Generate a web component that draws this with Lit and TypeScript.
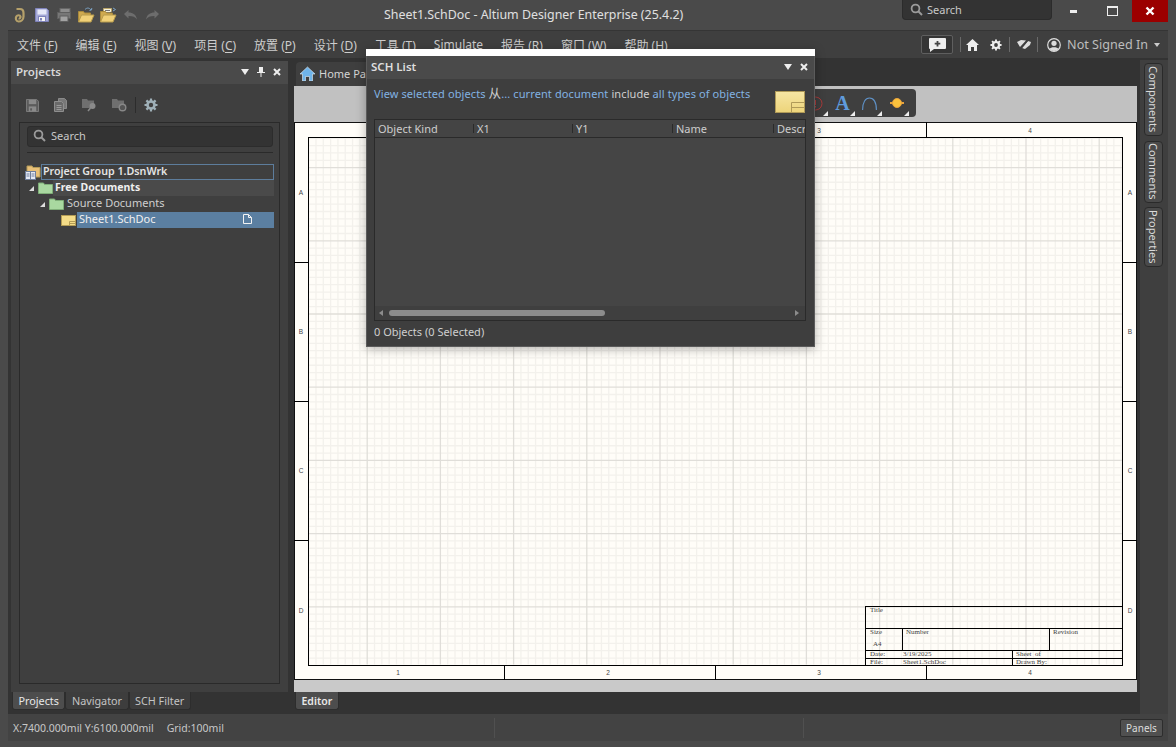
import { LitElement, html, css, svg } from 'lit';
import { customElement } from 'lit/decorators.js';

const saveIcon = html`<svg width="14" height="14" viewBox="0 0 14 14">
  <path d="M.5.5h11l2 2v11H.5z" fill="#a4a8d6" stroke="#7f83bb"/><rect x="2.500" y="1.500" width="9" height="5" fill="#e6e8f8"/><rect x="3.500" y="8.500" width="7" height="5" fill="#f6f6f6" stroke="#7f83bb"/><rect x="5" y="10" width="2" height="2.500" fill="#7f83bb"/>
</svg>`;

const dimFloppy = html`<svg width="13" height="13" viewBox="0 0 14 14">
  <path d="M.5.5h11l2 2v11H.5z" fill="#5c5c5c" stroke="#7f7f7f"/><rect x="3" y="1" width="8" height="4.500" fill="#8a8a8a"/><rect x="3" y="8" width="8" height="5.500" fill="#8a8a8a"/><rect x="4.500" y="10" width="2" height="2.500" fill="#5c5c5c"/>
</svg>`;

const printer = html`<svg width="14" height="14" viewBox="0 0 14 14">
  <rect x="3" y=".5" width="10" height="5" fill="#8d8d8d" stroke="#666"/><rect x=".5" y="4.500" width="13" height="6" fill="#777" stroke="#5f5f5f"/><rect x="3" y="8" width="8" height="5.500" fill="#a2a2a2" stroke="#5f5f5f"/>
</svg>`;

const openFolder = (papers: boolean) => html`<svg width="17" height="16" viewBox="0 0 17 16">
  ${papers ? svg`<path d="M3.500 8V1.500h8v3" fill="#f6f1df" stroke="#bba668"/><path d="M5 3.500h5M5 5.500h5" stroke="#777"/>` : svg`<path d="M7 2.500c2-2 4-2 6 .5" fill="none" stroke="#7ba2c4"/>`}
  <path d="M.5 15V4.500h5l1 1.500h6V8" fill="#cfa94f" stroke="#a98a3c"/><path d="M.5 15l3-7h12.500l-3 7z" fill="#f0d078" stroke="#b69a4c"/>
  ${papers ? svg`<path d="M13 1l2.500 1.500L13 4" fill="none" stroke="#7ba2c4"/>` : svg`<path d="M11.500 3.500L13.500 3l.3-2" fill="none" stroke="#7ba2c4"/>`}
</svg>`;

const undo = (flip: boolean) => html`<svg class=${flip ? 'flip' : ''} width="15" height="12" viewBox="0 0 15 12">
  <path d="M1 5l4.500-4v2.500c4.500 0 7.500 2 8.500 7-1.500-2.500-4-3.500-8.500-3.500V9.500z" fill="#6d6d6d"/>
</svg>`;

const magnifier = html`<svg width="13" height="13" viewBox="0 0 13 13"><circle cx="5.500" cy="5.500" r="3.900" fill="none" stroke="#9a9a9a" stroke-width="1.800"/><path d="M8.500 8.500l3.500 3.500" stroke="#9a9a9a" stroke-width="2"/></svg>`;

const gear = (color: string, hole: string, size = 14) => html`<svg width=${size} height=${size} viewBox="0 0 14 14">
  <circle cx="7" cy="7" r="4.800" fill=${color}/><path d="M7 .5v13M.5 7h13M2.400 2.400l9.200 9.200M11.600 2.400l-9.200 9.200" stroke=${color} stroke-width="2.200"/><circle cx="7" cy="7" r="2.200" fill=${hole}/>
</svg>`;

const greenFolder = html`<svg width="15" height="12" viewBox="0 0 15 12"><path d="M.5 11.500V1h5l1 1.500h8v9z" fill="#a9d8a0" stroke="#7fae78"/></svg>`;

const sheetIcon = html`<svg width="15" height="11" viewBox="0 0 15 11"><rect x=".5" y=".5" width="14" height="10" fill="#f4dc88" stroke="#b39c55"/><path d="M8.500 10.500v-4h6M8.500 8.500h6" fill="none" stroke="#b39c55"/></svg>`;

const cornerMark = html`<svg class="corner" width="5" height="5" viewBox="0 0 5 5"><path d="M5 0v5H0z" fill="#eee"/></svg>`;

const caret = html`<svg width="8" height="6" viewBox="0 0 8 6"><path d="M0 0h8L4 6z" fill="#eee"/></svg>`;

const closeX = html`<svg width="8" height="8" viewBox="0 0 8 8"><path d="M1 1l6 6M7 1L1 7" stroke="#eee" stroke-width="2"/></svg>`;

const pin = html`<svg width="8" height="10" viewBox="0 0 8 10"><path d="M2 0h4v5h2v1H4.500v4h-1V6H0V5h2z" fill="#eee"/></svg>`;

const MENU = [
  ['文件 (', 'F', ')'], ['编辑 (', 'E', ')'], ['视图 (', 'V', ')'], ['项目 (', 'C', ')'], ['放置 (', 'P', ')'], ['设计 (', 'D', ')'],
  ['工具 (', 'T', ')'], ['Simulate', '', ''], ['报告 (', 'R', ')'], ['窗口 (', 'W', ')'], ['帮助 (', 'H', ')'],
];

const GRID_X0 = 294;
const GRID_Y0 = 680;
const MINOR = 7.32;

function sheet() {
  const minor = [];
  const major = [];
  for (let i = 0; i * MINOR < 843; i++) {
    const x = GRID_X0 + i * MINOR;
    (i % 10 === 0 ? major : minor).push(svg`<line x1=${x} x2=${x} y1="122" y2="680"/>`);
  }
  for (let i = 0; i * MINOR < 558; i++) {
    const y = GRID_Y0 - i * MINOR;
    (i % 10 === 0 ? major : minor).push(svg`<line x1="294" x2="1137" y1=${y} y2=${y}/>`);
  }
  // the top 1 and 2 sit under the SCH List window
  const top: [number, string][] = [[819, '3'], [1030, '4']];
  const bottom: [number, string][] = [[398, '1'], [608, '2'], [819, '3'], [1030, '4']];
  const rows: [number, string][] = [[192, 'A'], [331, 'B'], [470, 'C'], [610, 'D']];
  return html`<svg class="sheet" width="843" height="558" viewBox="294 122 843 558">
    <defs><clipPath id="inner"><rect x="308.500" y="137.500" width="814" height="527"/></clipPath></defs>
    <rect x="294" y="122" width="843" height="558" fill="#fffdf8"/>
    <g clip-path="url(#inner)">
      <g stroke="#f3f1ec" stroke-width="1.300">${minor}</g>
      <g stroke="#e0ded9" stroke-width="1.300">${major}</g>
    </g>
    <g fill="none" stroke="#000" stroke-width="1" shape-rendering="crispEdges">
      <rect x="294.500" y="122.500" width="842" height="557" stroke="#111"/>
      <rect x="308.500" y="137.500" width="814" height="528"/>
      <path d="M504.500 122v15M715.500 122v15M926.500 122v15M504.500 665v15M715.500 665v15M926.500 665v15"/>
      <path d="M294 262.500h14M294 401.500h14M294 540.500h14M1123 262.500h14M1123 401.500h14M1123 540.500h14"/>
      <path d="M865.500 665V606.500H1123M865.500 628.500H1123M865.500 650.500H1123M865.500 658.500H1123M902.500 628.500v22M1049.500 628.500v22M1012.500 650.500v15"/>
    </g>
    <g class="sheet-text" text-anchor="middle">
      ${top.map(([x, t]) => svg`<text x=${x} y="133">${t}</text>`)}
      ${bottom.map(([x, t]) => svg`<text x=${x} y="675">${t}</text>`)}
      ${rows.map(([y, t]) => svg`<text x="301" y=${y + 3}>${t}</text><text x="1130" y=${y + 3}>${t}</text>`)}
    </g>
    <g class="sheet-text small">
      <text x="870" y="612">Title</text><text x="870" y="634">Size</text><text x="906" y="634">Number</text><text x="1053" y="634">Revision</text>
      <text x="873" y="646">A4</text><text x="870" y="656">Date:</text><text x="903" y="656">3/19/2025</text><text x="1016" y="656">Sheet&#160;&#160;of</text>
      <text x="870" y="664">File:</text><text x="903" y="664">Sheet1.SchDoc</text><text x="1016" y="664">Drawn By:</text>
    </g>
  </svg>`;
}

@customElement('app-root')
export class AppRoot extends LitElement {
  static styles = css`
    :host {
      display: block;
      position: relative;
      width: 1176px;
      height: 747px;
      overflow: hidden;
      background: #4a4a4a;
      color: #cfcfcf;
      font-family: 'Noto Sans', 'Noto Sans CJK SC', sans-serif;
      font-size: 11px;
    }
    svg { display: block; flex: none; }
    .flip { transform: scaleX(-1); }

    .titlebar { height: 30px; display: flex; align-items: flex-start; position: relative; }
    .quick { display: flex; align-items: center; height: 29px; padding-left: 14px; }
    .logo { margin-right: 10px; }
    .quick .q { margin-right: 8px; }
    .quick .q.tight { margin-right: 7px; }
    .quick .q.open-a { margin-right: 5px; }
    .quick .q.open-b { margin-right: 6px; }
    .title { position: absolute; left: 384px; top: 6px; font-size: 12.400px; color: #e0e0e0; white-space: nowrap; }
    .searchbox { margin-left: auto; width: 150px; height: 20px; box-sizing: border-box; background: #333; border: 1px solid #2b2b2b; border-top: 0; border-radius: 0 0 4px 4px; display: flex; align-items: center; gap: 4px; padding-left: 7px; color: #c8c8c8; }
    .winbtn { width: 36px; height: 22px; display: flex; align-items: center; justify-content: center; }
    .winbtn.min { margin-left: 4px; margin-right: 2px; }
    .winbtn.close { background: #9b0000; margin-left: 2px; margin-right: 8px; }

    .frame { margin: 0 8px; height: 711px; display: flex; flex-direction: column; background: #333; border-top: 1px solid #353535; box-sizing: border-box; }
    .menubar { height: 27px; flex: none; display: flex; align-items: center; background: #3f3f3f; padding-left: 9px; font-size: 12px; color: #cdcdcd; }
    .menu { display: flex; gap: 18px; }
    .menu u { text-underline-offset: 2px; }
    .tools { margin-left: auto; display: flex; align-items: center; margin-right: 8px; }
    .chat { width: 32px; height: 19px; box-sizing: border-box; border: 1px solid #5f5f5f; border-radius: 2px; background: #353535; display: flex; align-items: center; justify-content: center; margin-right: 7px; }
    .vsep { width: 1px; height: 15px; background: #6a6a6a; }
    .vsep.gap { margin-left: 2px; }
    .tool-ico { display: flex; width: 23px; justify-content: center; }
    .tool-ico.wide { width: 27px; }
    .user { display: flex; align-items: center; gap: 6px; margin-left: 9px; font-size: 12.600px; color: #bdbdbd; }

    .main { flex: 1; min-height: 0; display: flex; padding: 3px 0 0 3px; }
    .panel { width: 277px; display: flex; flex-direction: column; margin-right: 6px; }
    .panel-head { height: 23px; flex: none; display: flex; align-items: center; background: #4a4a4a; padding: 0 7px 2px 5px; box-sizing: border-box; font-weight: 600; font-size: 11.500px; color: #d8d8d8; }
    .head-actions { margin-left: auto; display: flex; align-items: center; gap: 8px; }
    .panel-body { flex: 1; background: #3f3f3f; padding: 0 8px; display: flex; flex-direction: column; min-height: 0; box-sizing: border-box; }
    .panel-tools { height: 38px; flex: none; display: flex; align-items: center; gap: 15px; padding: 4px 0 0 7px; box-sizing: border-box; }
    .panel-tools .vsep { height: 16px; background: #2c2c2c; margin: 0 -7px 0 -7px; }
    .tree-box { flex: 1; border: 1px solid #2a2a2a; margin-bottom: 8px; padding: 3px 6px 0 7px; box-sizing: border-box; }
    .pane-search { height: 21px; box-sizing: border-box; background: #333; border: 1px solid #2c2c2c; border-radius: 3px; display: flex; align-items: center; gap: 5px; padding: 0 0 2px 5px; color: #c8c8c8; }
    .rule { height: 1px; background: #2a2a2a; margin-top: 5px; }
    .tree { margin-top: 11px; display: flex; flex-direction: column; margin-left: -2px; margin-right: -1px; }
    .row { height: 16px; display: flex; align-items: center; white-space: nowrap; color: #cfcfcf; }
    .row .arrow { width: 0; height: 0; border-left: 5px solid transparent; border-bottom: 5px solid #ddd; margin-right: 4px; }
    .label { flex: 1; height: 100%; display: flex; align-items: center; padding: 0 0 3px 2px; box-sizing: border-box; }
    .l0 .label { border: 1px solid #5d7d9c; font-weight: 600; font-size: 10.700px; color: #e4e4e4; margin-left: -1px; padding: 0 0 2px 1px; }
    .l1 { padding-left: 4px; }
    .l1 .label { background: #4a4a4a; font-weight: 700; font-size: 10.500px; color: #efefef; padding-bottom: 2px; }
    .l2 { padding-left: 15px; }
    .l2 .label { padding-left: 3px; }
    .l3 { padding-left: 36px; }
    .l3 .label { background: #5b7fa1; color: #f0f0f0; justify-content: space-between; padding-right: 22px; margin-left: 1px; }
    .proj-ico { position: relative; width: 17px; height: 15px; }

    .tabs { display: flex; height: 22px; flex: none; background: #333; padding-left: 1px; }
    .tab { height: 18px; display: flex; align-items: center; padding: 0 5.500px; box-sizing: border-box; border: 1px solid #2d2d2d; border-top: 0; border-radius: 0 0 3px 3px; background: #3d3d3d; color: #c4c4c4; font-size: 10.800px; }
    .tab.on { background: #4d4d4d; color: #e8e8e8; }
    .tab.strong { font-weight: 600; font-size: 10.500px; }

    .doc { width: 843px; display: flex; flex-direction: column; }
    .doc-tabs { height: 25px; flex: none; display: flex; align-items: flex-end; }
    .doc-tab { margin-left: 2px; width: 104px; height: 24px; box-sizing: border-box; background: #3f3f3f; border-radius: 4px 4px 0 0; display: flex; align-items: center; gap: 4px; padding: 0 0 2px 4px; color: #d4d4d4; }
    .placer { height: 36px; flex: none; background: #c1c1c1; display: flex; justify-content: flex-end; padding: 3px 221px 0 0; box-sizing: border-box; }
    .active-bar { width: 400px; height: 28px; background: #3f3f3f; border-radius: 4px; display: flex; align-items: center; justify-content: flex-end; padding-right: 6px; box-sizing: border-box; }
    .ab-item { width: 27px; height: 28px; display: flex; align-items: center; justify-content: center; position: relative; }
    .corner { position: absolute; right: 1px; bottom: 1px; }
    .glyph-a { font: 700 20px 'Liberation Serif', serif; color: #5f9bdc; }
    .sheet-wrap { height: 570px; flex: none; background: #c9c9c9; }
    .sheet-text { font: 6.500px 'Liberation Sans', sans-serif; fill: #444; }
    .sheet-text.small { font: 7px 'Liberation Serif', serif; }
    .doc-foot { flex: 1; display: flex; }

    .dock { width: 28px; margin-left: 3px; margin-top: -1px; background: #3f3f3f; display: flex; flex-direction: column; align-items: center; gap: 4.500px; padding-top: 3px; box-sizing: border-box; }
    .dock-tab { width: 19px; box-sizing: border-box; border: 1px solid #2a2a2a; border-radius: 4px; background: #4a4a4a; writing-mode: vertical-rl; display: flex; align-items: center; justify-content: center; color: #dadada; font-size: 11px; margin-right: 2px; }
    .dock-tab.components { height: 73px; }
    .dock-tab.comments { height: 62px; }
    .dock-tab.properties { height: 60px; }

    .status { height: 27px; flex: none; background: #434343; display: flex; align-items: center; padding-left: 5px; color: #c8c8c8; position: relative; font-size: 10.500px; }
    .status span + span { margin-left: 13px; }
    .status .panels { position: absolute; right: 5px; top: 5px; height: 18px; width: 43px; margin: 0; box-sizing: border-box; border: 1px solid #2d2d2d; border-radius: 2px; background: #505050; display: flex; align-items: center; justify-content: center; color: #ddd; font-size: 10px; }
    .divider { position: absolute; top: 4px; height: 20px; width: 1px; background: #505050; }
    .d1 { left: 486px; }
    .d2 { left: 795px; }

    .dialog { position: absolute; left: 366px; top: 49px; width: 449px; height: 298px; box-sizing: border-box; background: #3e3e3e; border-right: 1px solid #5b5b5b; border-bottom: 1px solid #5b5b5b; border-left: 1px solid #5b5b5b; box-shadow: 0 2px 10px rgba(0, 0, 0, 0.3); display: flex; flex-direction: column; }
    .dlg-top { height: 7px; background: #fff; flex: none; margin: 0 -1px; }
    .dlg-head { height: 23px; flex: none; display: flex; align-items: center; background: #4a4a4a; padding: 0 6px 2px 4px; box-sizing: border-box; font-weight: 600; font-size: 11.500px; color: #dedede; }
    .dlg-body { flex: 1; padding: 0 8px 0 7px; display: flex; flex-direction: column; min-height: 0; }
    .filter { height: 40px; flex: none; display: flex; align-items: flex-start; padding-top: 4px; box-sizing: border-box; color: #cfcfcf; }
    .filter-text { white-space: pre; letter-spacing: 0.100px; }
    .filter a { color: #82b2e2; }
    .cjk { font-size: 12.500px; }
    .filter svg { margin-left: auto; margin-top: 8px; margin-right: 1px; }
    .table { height: 200px; flex: none; border: 1px solid #2a2a2a; background: #454545; display: flex; flex-direction: column; }
    .thead { height: 17px; flex: none; display: grid; grid-template-columns: 99px 99px 100px 101px 1fr; background: #444; border-bottom: 1px solid #2a2a2a; overflow: hidden; }
    .th { display: flex; align-items: center; padding-left: 3px; border-right: 1px solid #2a2a2a; white-space: nowrap; color: #cdcdcd; height: 9px; margin-top: 4px; line-height: 9px; }
    .th:last-child { border-right: 0; }
    .tbody { flex: 1; }
    .hscroll { height: 14px; flex: none; background: #3f3f3f; display: flex; align-items: center; padding: 0 6px 0 4px; }
    .thumb { width: 216px; height: 6px; border-radius: 3px; background: #8c8c8c; margin-left: 6px; }
    .arrow-r { margin-left: auto; width: 0; height: 0; border-top: 3.500px solid transparent; border-bottom: 3.500px solid transparent; border-left: 4px solid #8c8c8c; }
    .arrow-l { width: 0; height: 0; border-top: 3.500px solid transparent; border-bottom: 3.500px solid transparent; border-right: 4px solid #8c8c8c; }
    .dlg-status { flex: 1; display: flex; align-items: center; color: #cfcfcf; padding-bottom: 5px; }
  `;

  render() {
    return html`
      <div class="titlebar">
        <div class="quick">
          <svg class="logo" width="11" height="16" viewBox="0 0 11 16"><path d="M2.500 2h3.500c2.500 0 3.500 2 3.500 4v3.500c0 3-2.500 5-5 5-2.500 0-3.200-3-2.200-5 1-1.700 3.700-1.700 4.200 0 .2 1.500-1 2.300-1.800 1.800" fill="none" stroke="#b5a06a" stroke-width="2.200"/></svg>
          <span class="q">${saveIcon}</span>
          <span class="q tight">${printer}</span>
          <span class="q open-a">${openFolder(false)}</span>
          <span class="q open-b">${openFolder(true)}</span>
          <span class="q tight">${undo(false)}</span>
          <span class="q">${undo(true)}</span>
        </div>
        <div class="title">Sheet1.SchDoc - Altium Designer Enterprise (25.4.2)</div>
        <div class="searchbox">${magnifier}<span>Search</span></div>
        <div class="winbtn min"><svg width="8" height="4"><rect width="7" height="3" y="1" fill="#eee"/></svg></div>
        <div class="winbtn"><svg width="11" height="10"><rect x=".5" y=".5" width="10" height="9" fill="none" stroke="#eee"/><rect width="11" height="2" fill="#eee"/></svg></div>
        <div class="winbtn close"><svg width="10" height="10" viewBox="0 0 10 10"><path d="M1.500 1.500l7 7M8.500 1.500l-7 7" stroke="#fff" stroke-width="2.400"/></svg></div>
      </div>

      <div class="frame">
        <div class="menubar">
          <div class="menu">${MENU.map(([a, k, b]) => html`<span>${a}${k ? html`<u>${k}</u>` : ''}${b}</span>`)}</div>
          <div class="tools">
            <div class="chat"><svg width="17" height="14" viewBox="0 0 17 14"><path d="M1 0h15a1 1 0 0 1 1 1v9a1 1 0 0 1-1 1H5l-4 3V11a1 1 0 0 1-1-1V1a1 1 0 0 1 1-1z" fill="#eee"/><path d="M8.500 3v5.500M5.700 5.700h5.600" stroke="#444" stroke-width="1.800"/></svg></div>
            <div class="vsep"></div>
            <div class="tool-ico"><svg width="13" height="12" viewBox="0 0 13 12"><path d="M6.500 0L13 6h-2v6H8V8H5v4H2V6H0z" fill="#eee"/></svg></div>
            <div class="tool-ico">${gear('#eee', '#3f3f3f', 12)}</div>
            <div class="vsep gap"></div>
            <div class="tool-ico wide"><svg width="14" height="13" viewBox="0 0 14 13"><path d="M0 4l4-2 5 .5L3 9zM5 10l6-7 3 1-1 3-5 4z" fill="#ddd"/><path d="M12.500 0L2 13" stroke="#3f3f3f" stroke-width="1.200"/></svg></div>
            <div class="vsep"></div>
            <div class="user">
              <svg width="14" height="14" viewBox="0 0 14 14"><circle cx="7" cy="7" r="6.300" fill="none" stroke="#ddd" stroke-width="1.200"/><circle cx="7" cy="5.300" r="2.600" fill="#ddd"/><path d="M2.500 11c1-2.500 8-2.500 9 0-2 2.500-7 2.500-9 0z" fill="#ddd"/></svg>
              <span>Not Signed In</span>
              <svg width="6" height="4" viewBox="0 0 6 4"><path d="M0 0h6L3 4z" fill="#ccc"/></svg>
            </div>
          </div>
        </div>

        <div class="main">
          <div class="panel">
            <div class="panel-head">Projects
              <div class="head-actions">${caret}${pin}${closeX}</div>
            </div>
            <div class="panel-body">
              <div class="panel-tools">
                ${dimFloppy}
                <svg width="13" height="14" viewBox="0 0 13 14"><path d="M4.500.5h6l2 2v8h-8z" fill="#787878" stroke="#8a8a8a"/><path d="M.5 3.500h7l2 2v8h-9z" fill="#6a6a6a" stroke="#8f8f8f"/><path d="M2.500 7.500h5M2.500 9.500h5M2.500 11.500h5" stroke="#999"/></svg>
                <svg width="15" height="14" viewBox="0 0 15 14"><path d="M0 1h5l1 1.500h6V10H0z" fill="#6f6f6f"/><circle cx="10.500" cy="8" r="3" fill="#8a8a8a"/><path d="M8.500 10L6 13" stroke="#8a8a8a" stroke-width="1.500"/></svg>
                <svg width="15" height="14" viewBox="0 0 15 14"><path d="M0 1h5l1 1.500h6V10H0z" fill="#6f6f6f"/><circle cx="10.500" cy="9.500" r="3.300" fill="#555" stroke="#888" stroke-width="1.400"/></svg>
                <div class="vsep"></div>
                ${gear('#9fb0b8', '#3f3f3f', 14)}
              </div>
              <div class="tree-box">
                <div class="pane-search">${magnifier}<span>Search</span></div>
                <div class="rule"></div>
                <div class="tree">
                  <div class="row l0">
                    <svg class="proj-ico" viewBox="0 0 17 15"><path d="M2 9V1h5l1 1.500h7V12H8z" fill="#e8c078" stroke="#b39a58"/><rect x=".5" y="6.500" width="5" height="8" fill="#e6eaf4" stroke="#6f7f9c"/><rect x="5.500" y="6.500" width="5" height="8" fill="#e6eaf4" stroke="#6f7f9c"/><path d="M1.500 9h3M1.500 11h3M6.500 9h3M6.500 11h3" stroke="#6f7f9c"/></svg>
                    <div class="label">Project Group 1.DsnWrk</div>
                  </div>
                  <div class="row l1"><span class="arrow"></span>${greenFolder}<div class="label">Free Documents</div></div>
                  <div class="row l2"><span class="arrow"></span>${greenFolder}<div class="label">Source Documents</div></div>
                  <div class="row l3">${sheetIcon}
                    <div class="label">Sheet1.SchDoc
                      <svg width="9" height="10" viewBox="0 0 9 10"><path d="M.5.5h5l3 3v6h-8z" fill="none" stroke="#f2f2f2"/><path d="M5.500.5v3h3" fill="none" stroke="#f2f2f2"/></svg>
                    </div>
                  </div>
                </div>
              </div>
            </div>
            <div class="tabs">
              <div class="tab on">Projects</div>
              <div class="tab">Navigator</div>
              <div class="tab">SCH Filter</div>
            </div>
          </div>

          <div class="doc">
            <div class="doc-tabs">
              <div class="doc-tab">
                <svg width="15" height="15" viewBox="0 0 15 15"><path d="M7.500 1L15 8h-2.500v7h-3v-4.500h-4V15h-3V8H0z" fill="#6fb4ea" stroke="#e8f2fa" stroke-width=".6"/></svg>
                <span>Home Page</span>
              </div>
            </div>
            <div class="placer">
              <div class="active-bar">
                <div class="ab-item"><svg width="15" height="15" viewBox="0 0 15 15"><circle cx="7.500" cy="7.500" r="6.500" fill="none" stroke="#a83a3a"/><path d="M7.500 4v5M7.500 10v1.500" stroke="#a83a3a"/></svg>${cornerMark}</div>
                <div class="ab-item"><span class="glyph-a">A</span>${cornerMark}</div>
                <div class="ab-item"><svg width="15" height="13" viewBox="0 0 15 13"><path d="M.6 13C.6 5 3.500 1 7.500 1s6.900 4 6.900 12" fill="none" stroke="#5f92c8" stroke-width="1.100"/></svg>${cornerMark}</div>
                <div class="ab-item"><svg width="14" height="12" viewBox="0 0 14 12"><path d="M0 6h14" stroke="#e8a23c" stroke-width="2"/><circle cx="7" cy="6" r="4.500" fill="#fbc23c" stroke="#e8a23c"/></svg>${cornerMark}</div>
              </div>
            </div>
            <div class="sheet-wrap">${sheet()}</div>
            <div class="doc-foot"><div class="tabs"><div class="tab on strong">Editor</div></div></div>
          </div>

          <div class="dock">
            <div class="dock-tab components">Components</div>
            <div class="dock-tab comments">Comments</div>
            <div class="dock-tab properties">Properties</div>
          </div>
        </div>

        <div class="status">
          <span>X:7400.000mil Y:6100.000mil</span><span>Grid:100mil</span>
          <div class="divider d1"></div><div class="divider d2"></div>
          <span class="panels">Panels</span>
        </div>
      </div>

      <div class="dialog">
        <div class="dlg-top"></div>
        <div class="dlg-head">SCH List
          <div class="head-actions">${caret}${closeX}</div>
        </div>
        <div class="dlg-body">
          <div class="filter">
            <div class="filter-text"><a>View selected objects</a> <span class="cjk">从</span><a>...</a> <a>current document</a> include <a>all types of objects</a></div>
            <svg width="30" height="22" viewBox="0 0 30 22"><defs><linearGradient id="sheetfill" x1="0" y1="0" x2="0" y2="1"><stop offset="0" stop-color="#f7e6a4"/><stop offset="1" stop-color="#edd47a"/></linearGradient></defs><rect x=".5" y=".5" width="29" height="21" fill="url(#sheetfill)" stroke="#b09a58"/><path d="M16.500 21.500v-10h13M16.500 16.500h13" fill="none" stroke="#b09a58"/></svg>
          </div>
          <div class="table">
            <div class="thead">
              <div class="th">Object Kind</div><div class="th">X1</div><div class="th">Y1</div><div class="th">Name</div><div class="th">Descr</div>
            </div>
            <div class="tbody"></div>
            <div class="hscroll"><span class="arrow-l"></span><div class="thumb"></div><span class="arrow-r"></span></div>
          </div>
          <div class="dlg-status">0 Objects (0 Selected)</div>
        </div>
      </div>
    `;
  }
}
